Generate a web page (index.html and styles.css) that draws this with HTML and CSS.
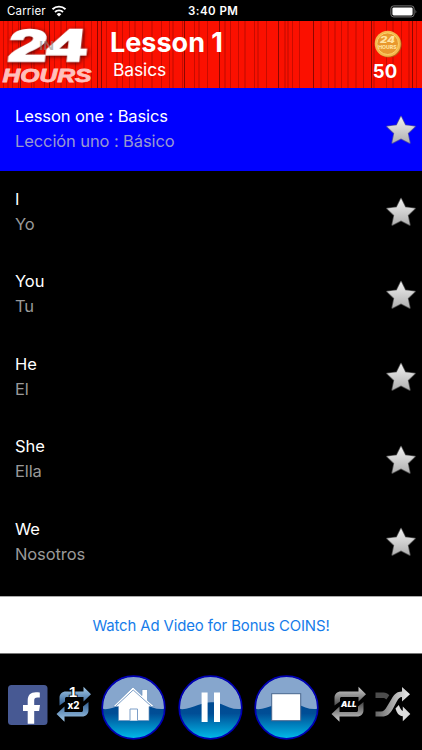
FILE: index.html
```html
<!DOCTYPE html>
<html lang="en">
<head>
<meta charset="utf-8">
<title>Lesson 1</title>
<link rel="stylesheet" href="styles.css">
</head>
<body>
<svg class="defs" width="0" height="0" aria-hidden="true">
  <defs>
    <linearGradient id="silver" x1="0" y1="0" x2="0" y2="1"><stop offset="0" stop-color="#f0f0f0"/><stop offset="1" stop-color="#b0b0b0"/></linearGradient>
    <linearGradient id="water" x1="0" y1="0" x2="0" y2="1"><stop offset="0" stop-color="#004a91"/><stop offset=".3" stop-color="#004e96"/><stop offset=".95" stop-color="#00b8e8"/></linearGradient>
    <clipPath id="disc"><circle cx="32.5" cy="32.5" r="31"/></clipPath>
    <symbol id="star" viewBox="0 0 32 32"><path d="M16 2.500l4.300 8.800 9.700 1.200-7.200 6.800 2 9.700L16 24.500l-8.800 4.500 2-9.700L2 12.500l9.700-1.200z" fill="url(#silver)" stroke="#777" stroke-opacity=".7" stroke-width="1.600" stroke-linejoin="round" paint-order="stroke"/></symbol>
    <symbol id="orb" viewBox="0 0 65 65">
      <circle cx="32.5" cy="32.500" r="31" fill="#86a6cd"/>
      <path clip-path="url(#disc)" d="M0 33.500c6 2 13-1 20-3.500 8-3 15-4 23-1 7 3 14 6.500 22 4.500V65H0z" fill="url(#water)"/>
      <circle cx="32.500" cy="32.500" r="31.300" fill="none" stroke="#0000b4" stroke-width="1.700"/>
    </symbol>
  </defs>
</svg>
<main class="app">
  <div class="status">
    <span class="carrier">Carrier</span>
    <svg class="wifi" width="16" height="12" viewBox="0 0 16 12"><g fill="none" stroke="#fff" stroke-width="1.900"><path d="M1.500 4.300a9.300 9.300 0 0 1 13 0M4 7a5.800 5.800 0 0 1 8 0"/></g><path d="M8 11.500L5.700 9.200a3.300 3.300 0 0 1 4.600 0z" fill="#fff"/></svg>
    <span class="clock">3:40 PM</span>
    <svg class="battery" width="28" height="13" viewBox="0 0 28 13"><rect x=".9" y=".9" width="23.200" height="11" rx="2.700" fill="none" stroke="#777"/><rect x="2.400" y="2.400" width="20.200" height="8" rx="1.300" fill="#fff"/><path d="M25.500 4.500q1.500 2 0 4z" fill="#777"/></svg>
  </div>
  <header class="header">
    <svg class="curtain" width="422" height="67" viewBox="0 0 422 67">
      <rect width="422" height="67" fill="#fb1000"/>
      <path d="M3.500 0v67M12.500 0v67M18.500 0v67M31.500 0v67M44.500 0v67M54.500 0v67M66.500 0v67M75.500 0v67M91.500 0v67M106.500 0v67M122.500 0v67M129.500 0v67M142.500 0v67M161.500 0v67M169.500 0v67M182.500 0v67M194.500 0v67M207.500 0v67M230.500 0v67M238.500 0v67M254.500 0v67M266.500 0v67M292.500 0v67M299.500 0v67M328.500 0v67M341.500 0v67M363.500 0v67M386.500 0v67M401.500 0v67M416.500 0v67" stroke="#c80b00" stroke-width="1"/>
      <path d="M8 0v67M34 0v67M61 0v67M84 0v67M117 0v67M135 0v67M152 0v67M173 0v67M199 0v67M225 0v67M245 0v67M258 0v67M285 0v67M288 0v67M321 0v67M335 0v67M348 0v67M356 0v67M374 0v67M393 0v67M409 0v67" stroke="#dc0d00" stroke-width="2"/>
      <path d="M20.500 0v67M49.500 0v67M97.500 0v67M101.500 0v67M184.500 0v67M219.500 0v67M278.500 0v67M313.500 0v67M371.500 0v67M412.500 0v67" stroke="#8c0700" stroke-width="1"/>
    </svg>
    <svg class="logo" width="100" height="67" viewBox="0 0 100 67">
      <g class="logo-shadow" transform="translate(3.500 0) skewX(-6)"><text class="logo-num" x="8" y="40" textLength="77" lengthAdjust="spacingAndGlyphs">24</text></g>
      <text class="logo-in" x="39" y="29" textLength="15" lengthAdjust="spacingAndGlyphs">IN</text>
      <text class="logo-hours" x="2.500" y="61" textLength="89" lengthAdjust="spacingAndGlyphs">HOURS</text>
    </svg>
    <div class="heading"><h1>Lesson 1</h1><p>Basics</p></div>
    <div class="coins">
      <svg width="28" height="28" viewBox="0 0 28 28"><circle cx="14.500" cy="14.500" r="13" fill="#ba6514"/><circle cx="13.700" cy="13.700" r="13" fill="#f5b64c"/><circle cx="13.700" cy="13.700" r="10.800" fill="#e9982e" stroke="#f9d36c"/><text class="coin-num" x="6" y="13.300" textLength="15" lengthAdjust="spacingAndGlyphs">24</text><text class="coin-word" x="4.200" y="18.500" textLength="18.500" lengthAdjust="spacingAndGlyphs">HOURS</text></svg>
      <strong>50</strong>
    </div>
  </header>
  <ul class="list">
    <li class="row active"><div><p class="en">Lesson one : Basics</p><p class="es">Lección uno : Básico</p></div><svg class="star"><use href="#star"/></svg></li>
    <li class="row"><div><p class="en">I</p><p class="es">Yo</p></div><svg class="star"><use href="#star"/></svg></li>
    <li class="row"><div><p class="en">You</p><p class="es">Tu</p></div><svg class="star"><use href="#star"/></svg></li>
    <li class="row"><div><p class="en">He</p><p class="es">El</p></div><svg class="star"><use href="#star"/></svg></li>
    <li class="row"><div><p class="en">She</p><p class="es">Ella</p></div><svg class="star"><use href="#star"/></svg></li>
    <li class="row"><div><p class="en">We</p><p class="es">Nosotros</p></div><svg class="star"><use href="#star"/></svg></li>
  </ul>
  <div class="ad"><a>Watch Ad Video for Bonus COINS!</a></div>
  <nav class="toolbar">
    <svg class="facebook" width="40" height="40" viewBox="0 0 40 40"><rect width="39.500" height="40" rx="3.500" fill="#475993"/><path d="M19.700 38.800V26H15v-6h4.700v-4.500c0-5.400 3-8.300 8.200-8.300 1.800 0 3 .1 3.900.3v5.100h-2.300c-2.500 0-3.300 1.200-3.300 3.200V20h5.800l-.9 6h-4.900v12.800z" fill="#fff"/></svg>
    <svg class="repeat" width="36" height="38" viewBox="0 0 36 38">
      <defs><linearGradient id="blueA" x1="0" y1="0" x2="0" y2="1"><stop offset="0" stop-color="#a4cae8"/><stop offset="1" stop-color="#305f94"/></linearGradient><linearGradient id="blueB" x1="0" y1="0" x2="0" y2="1"><stop offset="0" stop-color="#315f94"/><stop offset="1" stop-color="#a4cae8"/></linearGradient></defs>
      <path d="M3.500 19.500V12c0-4 2.500-6.500 6.500-6.500h17.500V.8l7.500 7.500-7.500 7.200V11H11c-1.500 0-2 .6-2 2v2.500z" fill="url(#blueA)"/>
      <path d="M32.500 16v8c0 4-2.500 6.500-6.500 6.500H8.500v5.200L.5 28l8-7.500V26H25c1.500 0 2-.6 2-2v-3.500z" fill="url(#blueB)"/>
      <text class="rep-one" x="12.700" y="11.300" textLength="8.500" lengthAdjust="spacingAndGlyphs">1</text><text class="rep-x" x="11.500" y="22.800" textLength="12" lengthAdjust="spacingAndGlyphs">x2</text>
    </svg>
    <svg class="orb home" viewBox="0 0 65 65"><use href="#orb"/><path d="M17.500 45.500V31.500h-5.500l20-19.500 9 8.500v-6h5.500V25.500l7 6h-5.500v14z" fill="#fff" stroke="#6c92bd" stroke-width=".7"/><path d="M14.500 31.500l17.700-16.500 18.300 16.500" fill="none" stroke="#7d9fc8" stroke-width="1"/><path d="M29 45.500v-11.500h7.500v11.500" fill="#fff" stroke="#7d9fc8"/></svg>
    <svg class="orb pause" viewBox="0 0 65 65"><use href="#orb"/><path d="M23.600 17.500h6v29.500h-6zM36 17.500h6v29.500h-6z" fill="#fff"/></svg>
    <svg class="orb stop" viewBox="0 0 65 65"><use href="#orb"/><rect x="17.700" y="18.700" width="29" height="27" fill="#fff" stroke="#48668e" stroke-width="1"/></svg>
    <svg class="all" width="36" height="38" viewBox="0 0 36 38">
      <defs><linearGradient id="grayA" x1="0" y1="0" x2="0" y2="1"><stop offset="0" stop-color="#d0d0d0"/><stop offset="1" stop-color="#4a4a4a"/></linearGradient><linearGradient id="grayB" x1="0" y1="0" x2="0" y2="1"><stop offset="0" stop-color="#444"/><stop offset="1" stop-color="#d0d0d0"/></linearGradient></defs>
      <path d="M3.500 19.500V12c0-4 2.500-6.500 6.500-6.500h17.500V.8l7.500 7.500-7.500 7.200V11H11c-1.500 0-2 .6-2 2v2.500z" fill="url(#grayA)"/>
      <path d="M32.500 16v8c0 4-2.500 6.500-6.500 6.500H8.500v5.200L.5 28l8-7.500V26H25c1.500 0 2-.6 2-2v-3.500z" fill="url(#grayB)"/>
      <text class="all-label" x="10" y="20.500" textLength="15.500" lengthAdjust="spacingAndGlyphs">ALL</text>
    </svg>
    <svg class="shuffle" width="36" height="38" viewBox="0 0 36 38">
      <defs><linearGradient id="shuf" x1="0" y1="0" x2="1" y2="0"><stop offset="0" stop-color="#666"/><stop offset="1" stop-color="#eee"/></linearGradient></defs>
      <path d="M.5 6.500h8c2.500 0 4 .8 5.800 2.700l-3 4.300C10 12.300 9.500 12 7.500 12h-7z" fill="#4c4c4c"/>
      <path d="M20.500 22.500l3.300-3.500c1.300 3.500 2.500 5.200 4 6v-4.500l7.500 7.500-7.500 7.200v-5c-4-.3-6-3.300-7.300-7.700z" fill="#ddd"/>
      <path d="M.5 25.500H6c2.500 0 4-1.500 6-5l4.500-7.500c2.800-4.800 5.500-7.500 10.500-7.500V1l8 7.300-8 7.200v-4.500c-2.500 0-3.500 1.500-5.200 4.500l-4 7.500c-2.800 5-5.800 7.500-10.800 7.500H.5z" fill="url(#shuf)"/>
    </svg>
  </nav>
</main>
</body>
</html>
```
FILE: styles.css
```css
* { box-sizing: border-box; }
body { margin: 0; background: #000; color: #fff; font-family: Inter, "Liberation Sans", sans-serif; }
h1, p, ul { margin: 0; padding: 0; }
.defs { position: absolute; }
.app { width: 422px; height: 750px; overflow: hidden; display: flex; flex-direction: column; }
.status { height: 21px; flex: none; display: grid; grid-template-columns: 44px 137px 50px 1fr 28px; align-items: center; padding: 1px 4px 0 7px; font-size: 11.5px; line-height: 20px; white-space: nowrap; }
.carrier { letter-spacing: .15px; }
.wifi { display: block; }
.clock { font-weight: 600; letter-spacing: .45px; }
.battery { grid-column: 5; display: block; }
.header { height: 67px; flex: none; position: relative; display: flex; overflow: hidden; }
.curtain { position: absolute; inset: 0; }
.logo, .heading, .coins { position: relative; }
.logo { flex: none; overflow: visible; }
.logo-shadow { filter: drop-shadow(1px 1px 2px #500); }
.logo-num { font: normal bold 45px "Liberation Sans", sans-serif; fill: #fff; stroke: #fff; stroke-width: 2.5px; }
.logo-in { font: bold 12px "Liberation Sans", sans-serif; fill: #888; fill-opacity: .6; }
.logo-hours { font: italic bold 18.500px "Liberation Sans", sans-serif; fill: #ffc0bc; stroke: #ffc0bc; stroke-width: .8px; }
.heading { margin-left: 10px; flex: 1; }
.heading h1 { font-size: 27px; line-height: 32px; margin-top: 5.500px; font-weight: 700; white-space: nowrap; }
.heading p { font-size: 17.5px; line-height: 22px; margin-left: 3px; letter-spacing: -.15px; }
.coins { width: 60px; margin-right: 7px; display: flex; flex-direction: column; align-items: center; padding-top: 9px; }
.coins svg { display: block; margin-left: 5px; }
.coins strong { font-size: 18.500px; line-height: 22px; margin-top: 2px; }
.coin-num { font: italic 900 8.500px Inter, sans-serif; fill: #ffe2a0; }
.coin-word { font: 800 5px Inter, sans-serif; fill: #ffe2a0; }
.list { list-style: none; height: 508px; flex: none; overflow: hidden; }
.row { height: 82.5px; display: flex; justify-content: space-between; padding: 16.400px 5px 0 15px; }
.row.active { background: #00f; }
.en, .es { font-size: 16.5px; line-height: 25px; letter-spacing: -.1px; }
.es { color: #999; }
.active .es { color: #9998cf; }
.star { width: 32px; height: 32px; margin-top: 9.500px; }
.ad { height: 58px; flex: none; background: #fff; border-top: 1px solid #aaa; border-bottom: 1px solid #777; display: flex; align-items: center; justify-content: center; padding-top: 2px; color: #167cea; font-size: 14.900px; letter-spacing: -.1px; }
.toolbar { height: 96px; flex: none; display: flex; align-items: flex-start; padding: 20px 0 0 8px; }
.toolbar svg { flex: none; display: block; }
.facebook { margin-top: 11px; }
.repeat { margin: 12px 0 0 8px; overflow: visible; }
.orb { width: 65px; height: 65px; }
.home { margin: 1px 0 0 9px; }
.pause { margin: 1px 0 0 12px; }
.stop { margin: 1px 0 0 10.500px; }
.all { margin: 12px 0 0 12px; }
.shuffle { margin: 12px 0 0 8px; }
.rep-one { font: bold 14px "Liberation Sans", sans-serif; fill: #fff; stroke: #000; stroke-width: 1.500px; paint-order: stroke; }
.rep-x { font: 800 10px Inter, sans-serif; fill: #fff; }
.all-label { font: italic 900 8px Inter, sans-serif; fill: #fff; }
```
